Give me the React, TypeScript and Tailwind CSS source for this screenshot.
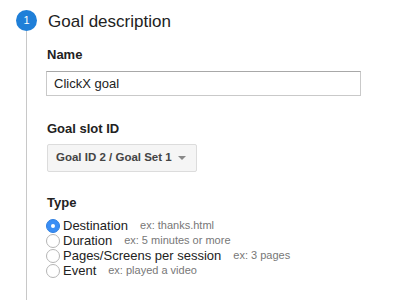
import { FC } from "react";

const TYPES = [
  { label: "Destination", hint: "ex: thanks.html", checked: true },
  { label: "Duration", hint: "ex: 5 minutes or more", checked: false },
  { label: "Pages/Screens per session", hint: "ex: 3 pages", checked: false },
  { label: "Event", hint: "ex: played a video", checked: false },
];

const Radio: FC<{ checked: boolean }> = ({ checked }) => {
  if (checked)
    return (
      <span className="flex items-center justify-center w-[14px] h-[14px] rounded-full bg-[#3a8ef5] border border-[#2f7fe0] shrink-0">
        <span className="w-[4px] h-[4px] rounded-full bg-white" />
      </span>
    );
  return (
    <span className="w-[14px] h-[14px] rounded-full bg-white border border-[#b5b5b5] shrink-0" />
  );
};

export default function App() {
  return (
    <div
      className="w-[407px] h-[300px] bg-white overflow-hidden flex text-[#222]"
      style={{ fontFamily: '"Liberation Sans", Arial, sans-serif' }}
    >
      <div className="w-[46px] shrink-0 flex flex-col items-center pt-[10px] pl-[7px]">
        <div className="w-[21px] h-[21px] rounded-full bg-[#1f7fd8] text-white text-[11px] flex items-center justify-center">
          1
        </div>
        <div className="w-px flex-grow bg-[#c8c8c8]" />
      </div>
      <div className="flex flex-col pt-[11px] flex-grow">
        <div className="text-[17px] leading-[22px] pl-[2px]">Goal description</div>

        <div className="mt-[14px] text-[13px] leading-[16px] font-bold pl-px">Name</div>
        <div className="mt-[8px] w-[315px] h-[25px] border border-[#c9c9c9] border-t-[#a8a8a8] flex items-center px-[7px] text-[13px]">
          ClickX goal
        </div>

        <div className="mt-[25px] text-[13px] leading-[16px] font-bold pl-px">Goal slot ID</div>
        <div className="mt-[7px] ml-px w-[150px] h-[28px] bg-[#f5f5f5] border border-[#dcdcdc] rounded-[2px] flex items-center pl-[8px] pr-[10px] text-[11.5px] font-bold text-[#444]">
          <span className="flex-grow">Goal ID 2 / Goal Set 1</span>
          <span className="w-0 h-0 border-l-[4px] border-r-[4px] border-t-[4px] border-l-transparent border-r-transparent border-t-[#888]" />
        </div>

        <div className="mt-[23px] text-[13px] leading-[16px] font-bold pl-px">Type</div>
        <div className="mt-[7px] flex flex-col">
          {TYPES.map((t) => (
            <div key={t.label} className="flex items-center h-[15px]">
              <Radio checked={t.checked} />
              <span className="ml-[3px] text-[13px] text-[#222]">{t.label}</span>
              <span className="ml-[12px] text-[11px] text-[#777]">{t.hint}</span>
            </div>
          ))}
        </div>
      </div>
    </div>
  );
}
